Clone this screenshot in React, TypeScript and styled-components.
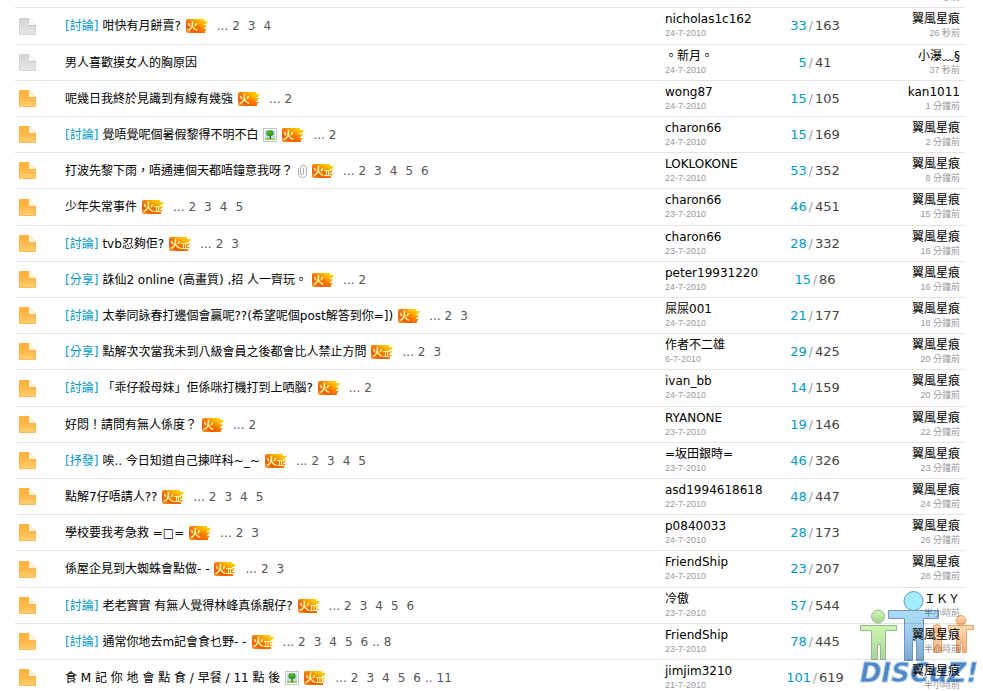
import React from 'react';
import styled, { createGlobalStyle } from 'styled-components';

const GlobalStyle = createGlobalStyle`
  body {
    margin: 0;
    background: #fff;
    color: #000;
    font: 12px/16px "DejaVu Sans", "Noto Sans CJK TC", sans-serif;
  }
`;

const Page = styled.main`
  height: 100vh;
  overflow: hidden;
  padding: 0 18px 0 15px;
  box-sizing: border-box;
`;

const ThreadTable = styled.table`
  width: 100%;
  margin-top: -28px;
  table-layout: fixed;
  border-collapse: separate;
  border-spacing: 0;
`;

const Row = styled.tr`
  height: 36px;

  &:nth-child(5n + 2) {
    height: 37px;
  }
`;

const Cell = styled.td`
  box-sizing: border-box;
  padding: 0;
  border-bottom: 1px solid #e5e5e0;
  white-space: nowrap;
  vertical-align: middle;
`;

const StatusCell = styled(Cell)`
  padding-left: 4px;

  svg {
    display: block;
  }
`;

const Byline = styled(Cell)<{ $end?: boolean }>`
  padding: 3px ${(p) => (p.$end ? 5 : 0)}px 0 0;
  text-align: ${(p) => (p.$end ? 'right' : 'left')};
  vertical-align: top;
`;

const CountCell = styled(Cell)`
  text-align: center;
  color: #444;
`;

const Subject = styled.div`
  display: flex;
  align-items: center;
`;

const Link = styled.a`
  color: #000;
  text-decoration: none;

  &:hover {
    text-decoration: underline;
  }
`;

const Category = styled(Link)`
  margin-right: 4px;
  color: #09c;
`;

const Replies = styled(Link)`
  font-size: 13px;
  color: #09c;
`;

const Slash = styled.span`
  margin: 0 2px;
  color: #999;
`;

const Views = styled.span`
  font-size: 13px;
`;

const Marks = styled.span`
  display: flex;
  align-items: center;
  gap: 5px;
  margin-left: 5px;
`;

const Pages = styled.span`
  display: flex;
  gap: 8px;
  margin-left: 9px;
  color: #555;
`;

const PageLink = styled(Link)`
  color: #555;
`;

const PageGroup = styled.span`
  display: flex;
  gap: 4px;
`;

const Name = styled(Link)`
  display: block;
`;

const When = styled.span`
  display: block;
  font: 9px/12px "Liberation Sans", "Noto Sans CJK TC", sans-serif;
  color: #999;
`;

const Watermark = styled.svg`
  position: fixed;
  right: 3px;
  bottom: 3px;
  pointer-events: none;
  mix-blend-mode: multiply;
`;

type Thread = {
  tag?: string;
  title: string;
  marks?: string;
  pages?: number[];
  last?: number;
  author: string;
  date: string;
  replies: number;
  views: number;
  poster: string;
  when: string;
  old?: boolean;
};

const W = '翼風星痕';

const threads: Thread[] = [
  { tag: '討論', title: '咁快有月餅賣?', marks: '1', pages: [2, 3, 4], author: 'nicholas1c162', date: '24-7-2010', replies: 33, views: 163, poster: W, when: '26 秒前', old: true },
  { title: '男人喜歡摸女人的胸原因', author: '。新月。', date: '24-7-2010', replies: 5, views: 41, poster: '小瀑﹏§', when: '37 秒前', old: true },
  { title: '呢幾日我終於見識到有線有幾強', marks: '1', pages: [2], author: 'wong87', date: '24-7-2010', replies: 15, views: 105, poster: 'kan1011', when: '1 分鐘前' },
  { tag: '討論', title: '覺唔覺呢個暑假黎得不明不白', marks: 'i1', pages: [2], author: 'charon66', date: '24-7-2010', replies: 15, views: 169, poster: W, when: '2 分鐘前' },
  { title: '打波先黎下雨，唔通連個天都唔鐘意我呀？', marks: 'a2', pages: [2, 3, 4, 5, 6], author: 'LOKLOKONE', date: '22-7-2010', replies: 53, views: 352, poster: W, when: '8 分鐘前' },
  { title: '少年失常事件', marks: '2', pages: [2, 3, 4, 5], author: 'charon66', date: '23-7-2010', replies: 46, views: 451, poster: W, when: '15 分鐘前' },
  { tag: '討論', title: 'tvb忍夠佢?', marks: '2', pages: [2, 3], author: 'charon66', date: '23-7-2010', replies: 28, views: 332, poster: W, when: '16 分鐘前' },
  { tag: '分享', title: '誅仙2 online (高畫質) ,招 人一齊玩。', marks: '1', pages: [2], author: 'peter19931220', date: '24-7-2010', replies: 15, views: 86, poster: W, when: '16 分鐘前' },
  { tag: '討論', title: '太拳同詠春打邊個會贏呢??(希望呢個post解答到你=])', marks: '1', pages: [2, 3], author: '屎屎001', date: '24-7-2010', replies: 21, views: 177, poster: W, when: '18 分鐘前' },
  { tag: '分享', title: '點解次次當我未到八級會員之後都會比人禁止方問', marks: '2', pages: [2, 3], author: '作者不二雄', date: '6-7-2010', replies: 29, views: 425, poster: W, when: '20 分鐘前' },
  { tag: '討論', title: '「乖仔殺母妹」佢係咪打機打到上哂腦?', marks: '1', pages: [2], author: 'ivan_bb', date: '24-7-2010', replies: 14, views: 159, poster: W, when: '20 分鐘前' },
  { title: '好悶！請問有無人係度？', marks: '1', pages: [2], author: 'RYANONE', date: '23-7-2010', replies: 19, views: 146, poster: W, when: '22 分鐘前' },
  { tag: '抒發', title: '唉.. 今日知道自己揀咩科~_~', marks: '2', pages: [2, 3, 4, 5], author: '=坂田銀時=', date: '23-7-2010', replies: 46, views: 326, poster: W, when: '23 分鐘前' },
  { title: '點解7仔唔請人??', marks: '2', pages: [2, 3, 4, 5], author: 'asd1994618618', date: '22-7-2010', replies: 48, views: 447, poster: W, when: '24 分鐘前' },
  { title: '學校要我考急救 =□=', marks: '1', pages: [2, 3], author: 'p0840033', date: '24-7-2010', replies: 28, views: 173, poster: W, when: '26 分鐘前' },
  { title: '係屋企見到大蜘蛛會點做- -', marks: '2', pages: [2, 3], author: 'FriendShip', date: '24-7-2010', replies: 23, views: 207, poster: W, when: '28 分鐘前' },
  { tag: '討論', title: '老老實實 有無人覺得林峰真係靚仔?', marks: '3', pages: [2, 3, 4, 5, 6], author: '冷傲', date: '23-7-2010', replies: 57, views: 544, poster: 'ＩＫＹ', when: '半小時前' },
  { tag: '討論', title: '通常你地去m記會食乜野- -', marks: '3', pages: [2, 3, 4, 5, 6], last: 8, author: 'FriendShip', date: '23-7-2010', replies: 78, views: 445, poster: W, when: '半小時前' },
  { title: '食 M 記 你 地 會 點 食 / 早餐 / 11 點 後', marks: 'i3', pages: [2, 3, 4, 5, 6], last: 11, author: 'jimjim3210', date: '21-7-2010', replies: 101, views: 619, poster: W, when: '半小時前' },
];

function FileIcon({ old }: { old?: boolean }) {
  const fill = old ? 'url(#fileGray)' : 'url(#fileOrange)';
  return (
    <svg width="17" height="17" viewBox="0 0 17 17" aria-hidden="true">
      <path d="M1 0H10L17 7V16Q17 17 16 17H1Q0 17 0 16V1Q0 0 1 0Z" fill={fill} />
      <path d="M.5 1V16.500H16.500V8" fill="none" stroke={old ? '#cdcdcf' : '#fbb044'} strokeOpacity=".7" />
      <path d="M10 0L17 7H10Z" fill={old ? '#f6f6f6' : '#fff3d8'} />
      <path d="M10 7.500H17" fill="none" stroke={old ? '#c8c8ca' : '#f9b54f'} />
    </svg>
  );
}

function FlameIcon({ level }: { level: number }) {
  return (
    <svg width="22" height="14" viewBox="0 0 22 14" role="img" aria-label={`hot ${level}`}>
      <path
        d="M2 0H18V2H22L20 5H18V6H21L19 9H18V10H21L19 12V14H2Q0 14 0 12V2Q0 0 2 0Z"
        fill="url(#flame)"
      />
      <text x="1" y="11" fontSize="11" fontWeight="700" fontFamily="Noto Sans CJK TC, sans-serif" fill="#fff8a0">
        火
      </text>
      {level > 1 && (
        <path
          d={level === 2 ? 'M12 6.500H19M12 11.500H19M14.500 7V11M16.500 7V11' : 'M12 6.500H20M12 11.500H20M13.500 7V11M16 7V11M18.500 7V11'}
          stroke="#fff3b0"
          fill="none"
        />
      )}
    </svg>
  );
}

function PictureIcon() {
  return (
    <svg width="14" height="14" viewBox="0 0 14 14" role="img" aria-label="picture">
      <rect x=".5" y=".5" width="13" height="13" fill="#fff" stroke="#c3c7b8" />
      <rect x="2" y="2" width="10" height="10" fill="#b5dcf6" />
      <rect x="2" y="10" width="10" height="2" fill="#93cd5c" />
      <path d="M6.500 7H8V11H6.500Z" fill="#7b5a22" />
      <path d="M5 2.500H9L10.500 4V6.500L9 8H5L3.500 6.500V4Z" fill="#3f9a1c" />
      <path d="M5 3.500H8V5.500H5Z" fill="#62bd2c" />
    </svg>
  );
}

function ClipIcon() {
  return (
    <svg width="9" height="14" viewBox="0 0 9 14" role="img" aria-label="attachment">
      <path
        d="M2.500 5V9Q2.500 10.500 4 10.500T5.500 9V4M2.500 5V3Q2.500 1.500 5 1.500T8.500 3V10Q8.500 13.500 4.500 13.500T.5 10V4"
        fill="none"
        stroke="#b0b0b0"
      />
    </svg>
  );
}

function Mark({ kind }: { kind: string }) {
  if (kind === 'i') return <PictureIcon />;
  if (kind === 'a') return <ClipIcon />;
  return <FlameIcon level={Number(kind)} />;
}

function SharedGradients() {
  return (
    <svg width="0" height="0" aria-hidden="true" display="block">
      <defs>
        <linearGradient id="fileOrange" x1="0" y1="0" x2="0" y2="1">
          <stop offset="0" stopColor="#ffb13c" />
          <stop offset=".5" stopColor="#ffb84a" />
          <stop offset="1" stopColor="#ffd274" />
        </linearGradient>
        <linearGradient id="fileGray" x1="0" y1="0" x2="0" y2="1">
          <stop offset="0" stopColor="#d2d2d4" />
          <stop offset="1" stopColor="#e8e8e8" />
        </linearGradient>
        <linearGradient id="flame" x1="0" y1="1" x2="1" y2="0">
          <stop offset="0" stopColor="#ffa030" />
          <stop offset=".25" stopColor="#f25a00" />
          <stop offset=".5" stopColor="#fb7a00" />
          <stop offset=".7" stopColor="#ffb400" />
          <stop offset="1" stopColor="#ffe800" />
        </linearGradient>
      </defs>
    </svg>
  );
}

function DiscuzLogo() {
  return (
    <Watermark width="122" height="100" viewBox="0 0 122 100" role="img" aria-label="Discuz!">
      <defs>
        <linearGradient id="blueMan" x1="0" y1="0" x2="0" y2="1">
          <stop offset="0" stopColor="#a8dcf6" />
          <stop offset=".4" stopColor="#a3cdee" />
          <stop offset="1" stopColor="#7da8d3" />
        </linearGradient>
        <linearGradient id="greenMan" x1="0" y1="0" x2="0" y2="1">
          <stop offset="0" stopColor="#d0f6b0" />
          <stop offset="1" stopColor="#a8d49c" />
        </linearGradient>
        <linearGradient id="orangeMan" x1="0" y1="0" x2="0" y2="1">
          <stop offset="0" stopColor="#ffdcae" />
          <stop offset="1" stopColor="#f3ab7b" />
        </linearGradient>
      </defs>
      <g fill="url(#greenMan)" stroke="#92b98d">
        <path d="M2.500 37.500H38.500V42.500H27.500V71.500H22.500V56.500H19.500V71.500H13.500V42.500H2.500Z" />
        <circle cx="20" cy="28.500" r="6.500" />
      </g>
      <g fill="url(#blueMan)" stroke="#7194bf">
        <path d="M30.500 22.500H80.500V30.500H65.500V72.500H58.500V52.500H54.500V72.500H46.500V30.500H30.500Z" />
        <circle cx="55.500" cy="13" r="9.500" fill="#a6ecff" />
      </g>
      <g fill="url(#orangeMan)" stroke="#e9a26c">
        <path d="M71.500 44.500H86.500V47.500H83.500V64.500H80.500V57.500H78.500V64.500H75.500V47.500H71.500Z" />
        <circle cx="79" cy="40.500" r="4" />
        <path d="M90.500 37.500H115.500V41.500H108.500V64.500H104.500V54.500H102.500V64.500H98.500V41.500H90.500Z" />
        <circle cx="103" cy="32.500" r="5" />
      </g>
      <text
        x="2"
        y="94"
        fontFamily="DejaVu Sans, sans-serif"
        fontSize="26"
        fontWeight="700"
        fontStyle="italic"
        fill="#4f86c4"
        stroke="#a9c9ec"
        strokeWidth="1"
      >
        DISCuZ!
      </text>
    </Watermark>
  );
}

function ThreadRow({ t }: { t: Thread }) {
  return (
    <Row>
      <StatusCell>
        <FileIcon old={t.old} />
      </StatusCell>
      <Cell>
        <Subject>
          {t.tag && <Category href="#tag">[{t.tag}]</Category>}
          <Link href="#thread">{t.title}</Link>
          {t.marks && (
            <Marks>
              {t.marks.split('').map((m) => (
                <Mark key={m} kind={m} />
              ))}
            </Marks>
          )}
          {t.pages && (
            <Pages>
              <PageGroup>
                <span>...</span>
                <PageLink href="#page">{t.pages[0]}</PageLink>
              </PageGroup>
              {t.pages.slice(1).map((p, i, rest) =>
                t.last && i === rest.length - 1 ? (
                  <PageGroup key={p}>
                    <PageLink href="#page">{p}</PageLink>
                    <span>..</span>
                    <PageLink href="#page">{t.last}</PageLink>
                  </PageGroup>
                ) : (
                  <PageLink key={p} href="#page">
                    {p}
                  </PageLink>
                ),
              )}
            </Pages>
          )}
        </Subject>
      </Cell>
      <Byline>
        <Name href="#author">{t.author}</Name>
        <When>{t.date}</When>
      </Byline>
      <CountCell>
        <Replies href="#replies">{t.replies}</Replies>
        <Slash>/</Slash>
        <Views>{t.views}</Views>
      </CountCell>
      <Byline $end>
        <Name href="#poster">{t.poster}</Name>
        <When>{t.when}</When>
      </Byline>
    </Row>
  );
}

export default function App() {
  return (
    <Page>
      <GlobalStyle />
      <SharedGradients />
      <ThreadTable>
        <colgroup>
          <col width="50" />
          <col />
          <col width="105" />
          <col width="90" />
          <col width="105" />
        </colgroup>
        <tbody>
          <Row>
            <Cell colSpan={4} />
            <Byline $end>
              <Name href="#poster">{W}</Name>
              <When>秒前</When>
            </Byline>
          </Row>
          {threads.map((t, i) => (
            <ThreadRow key={i} t={t} />
          ))}
        </tbody>
      </ThreadTable>
      <DiscuzLogo />
    </Page>
  );
}
